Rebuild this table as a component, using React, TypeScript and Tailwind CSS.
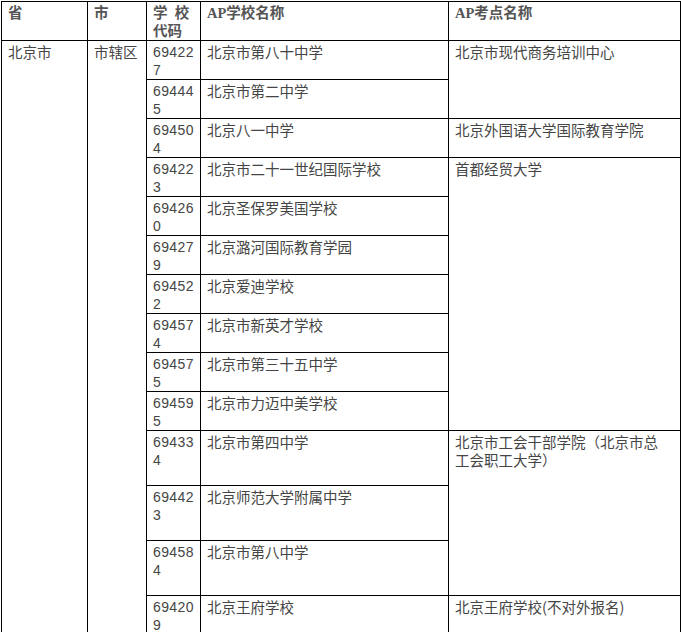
const font = "font-['Noto_Sans_CJK_SC','Liberation_Sans',sans-serif]";

type Row = {
  code: string;
  school: string;
  center?: string;
  span?: number;
  tall?: boolean;
};

const rows: Row[] = [
  { code: "694227", school: "北京市第八十中学", center: "北京市现代商务培训中心", span: 2 },
  { code: "694445", school: "北京市第二中学" },
  { code: "694504", school: "北京八一中学", center: "北京外国语大学国际教育学院", span: 1 },
  { code: "694223", school: "北京市二十一世纪国际学校", center: "首都经贸大学", span: 7 },
  { code: "694260", school: "北京圣保罗美国学校" },
  { code: "694279", school: "北京潞河国际教育学园" },
  { code: "694522", school: "北京爱迪学校" },
  { code: "694574", school: "北京市新英才学校" },
  { code: "694575", school: "北京市第三十五中学" },
  { code: "694595", school: "北京市力迈中美学校" },
  { code: "694334", school: "北京市第四中学", center: "北京市工会干部学院（北京市总|工会职工大学）", span: 3, tall: true },
  { code: "694423", school: "北京师范大学附属中学", tall: true },
  { code: "694584", school: "北京市第八中学", tall: true },
  { code: "694209", school: "北京王府学校", center: "北京王府学校(不对外报名)", span: 1, tall: true },
];

const cell = "border border-black align-top px-[6px] pt-[2px] pb-0 leading-[18px]";

export default function App() {
  return (
    <div className={`bg-white min-h-screen pt-[1px] pl-[1px] ${font} text-[14.5px] text-[#454545]`}>
      <table className="border-collapse table-fixed w-[679px]">
        <colgroup>
          <col className="w-[86px]" />
          <col className="w-[59px]" />
          <col className="w-[54px]" />
          <col className="w-[248px]" />
          <col className="w-[232px]" />
        </colgroup>
        <thead>
          <tr className="h-[39px] font-bold font-['Liberation_Serif','Noto_Sans_CJK_SC',serif] text-[#555]">
            <td className={cell}>省</td>
            <td className={cell}>市</td>
            <td className={cell}>
              学&nbsp;&nbsp;校
              <br />
              代码
            </td>
            <td className={cell}>AP学校名称</td>
            <td className={cell}>AP考点名称</td>
          </tr>
        </thead>
        <tbody>
          {rows.map((r, i) => (
            <tr key={r.code} className={r.tall ? "h-[55px]" : "h-[39px]"}>
              {i === 0 && (
                <>
                  <td className={cell} rowSpan={rows.length}>
                    北京市
                  </td>
                  <td className={cell} rowSpan={rows.length}>
                    市辖区
                  </td>
                </>
              )}
              <td className={`${cell} font-['Liberation_Sans',sans-serif] text-[14px] tracking-[0.4px]`}>
                {r.code.slice(0, 5)}
                <br />
                {r.code.slice(5)}
              </td>
              <td className={cell}>{r.school}</td>
              {r.center && (
                <td className={cell} rowSpan={r.span}>
                  {r.center.split("|").map((t, j) => (
                    <div key={j}>{t}</div>
                  ))}
                </td>
              )}
            </tr>
          ))}
        </tbody>
      </table>
    </div>
  );
}
